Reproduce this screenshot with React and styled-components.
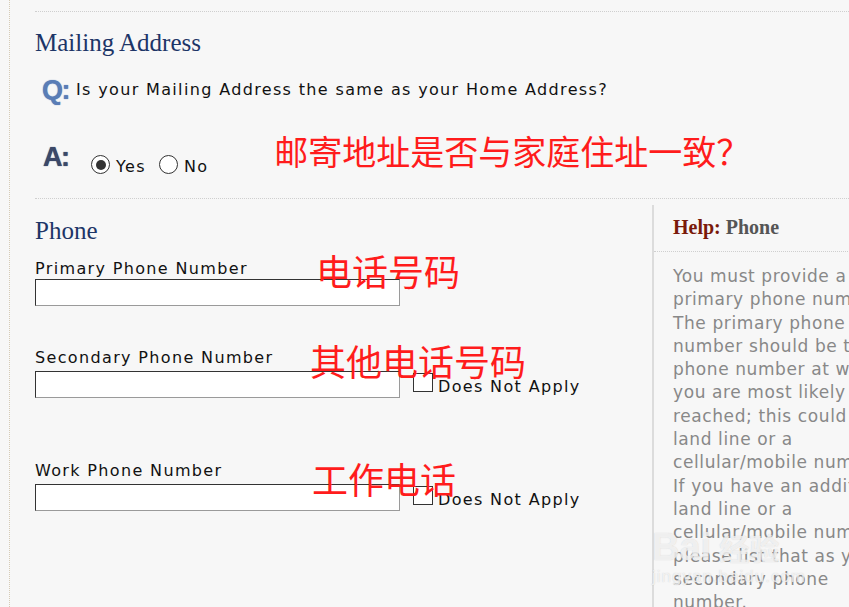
import React from 'react';
import styled, { createGlobalStyle } from 'styled-components';

const GlobalStyle = createGlobalStyle`
  html, body {
    margin: 0;
    padding: 0;
    background: #f7f7f7;
    overflow: hidden;
  }
  body {
    width: 849px;
    height: 607px;
    font-family: "DejaVu Sans", Verdana, sans-serif;
  }
`;

const Page = styled.div`
  margin-left: 9px;
  height: 607px;
  overflow: hidden;
  border-left: 1px dotted #d6cbb5;
  padding: 11px 0 0 25px;
  box-sizing: border-box;
`;

const Section = styled.section`
  border-top: 1px dotted #cfcfcf;
  margin-top: ${(p) => p.$top || 0}px;
`;

const Heading = styled.h2`
  margin: ${(p) => p.$top}px 0 0;
  font-family: "Liberation Serif", "Times New Roman", serif;
  font-weight: normal;
  font-size: 25px;
  line-height: 29px;
  color: #1d3567;
`;

const QaRow = styled.div`
  display: flex;
  align-items: flex-start;
  margin-top: ${(p) => p.$top}px;
  height: ${(p) => p.$height}px;
`;

const QaMark = styled.div`
  width: 26px;
  margin: ${(p) => p.$top || 0}px 0 0 ${(p) => p.$left}px;
  font-family: "Liberation Sans", Arial, sans-serif;
  font-weight: bold;
  font-size: 27px;
  line-height: 20px;
  height: 20px;
  letter-spacing: -1.5px;
  color: ${(p) => p.$color};
  text-shadow: 0 0 1px ${(p) => p.$color};
`;

const Text = styled.span`
  font-size: 16px;
  line-height: 19px;
  letter-spacing: 1.35px;
  color: #111;
`;

const Question = styled(Text)`
  margin-left: 8px;
`;

const RadioGroup = styled.div`
  display: flex;
  align-items: flex-start;
  margin: 23px 0 0 22px;
`;

const RadioOption = styled.label`
  display: flex;
  align-items: flex-start;
  margin-right: ${(p) => p.$gap || 0}px;
`;

const RadioDot = styled.span`
  width: 17px;
  height: 17px;
  border: 1px solid #333;
  border-radius: 50%;
  background: #fff;
  display: flex;
  align-items: center;
  justify-content: center;
  &::after {
    content: '';
    width: 10px;
    height: 10px;
    border-radius: 50%;
    background: ${(p) => (p.$checked ? '#333' : 'transparent')};
  }
`;

const RadioText = styled(Text)`
  margin: 2px 0 0 6px;
`;

const Note = styled.div`
  font-family: "Microsoft YaHei", "Noto Sans CJK SC", sans-serif;
  font-size: ${(p) => p.$size}px;
  line-height: 1;
  color: #ff1c1c;
  white-space: nowrap;
`;

const MailNote = styled(Note)`
  margin: 2px 0 0 66px;
`;

const Columns = styled.div`
  display: flex;
  align-items: flex-start;
`;

const FormColumn = styled.div`
  width: 617px;
  flex: none;
  padding-top: 17px;
`;

const Field = styled.div`
  position: relative;
  margin-top: ${(p) => p.$top}px;
`;

const FieldLabel = styled.label`
  display: block;
  font-size: 16px;
  line-height: 19px;
  letter-spacing: 1.35px;
  color: #111;
  margin-bottom: ${(p) => p.$gap}px;
`;

const FieldNote = styled(Note)`
  position: absolute;
  top: ${(p) => p.$y}px;
  left: ${(p) => p.$x}px;
  pointer-events: none;
`;

const InputRow = styled.div`
  display: flex;
  align-items: flex-start;
`;

const TextInput = styled.input`
  width: 365px;
  height: 27px;
  box-sizing: border-box;
  margin: 0;
  border: 1px solid;
  border-color: #333 #9a9a9a #9a9a9a #333;
  background: #fff;
  font-size: 15px;
`;

const CheckBox = styled.span`
  width: 20px;
  height: 19px;
  box-sizing: border-box;
  margin: 2px 0 0 13px;
  border: 1px solid #333;
  background: #fff;
`;

const CheckText = styled(Text)`
  margin: 6px 0 0 5px;
`;

const HelpPanel = styled.aside`
  flex: none;
  width: 260px;
  margin-top: 6px;
  min-height: 420px;
  border-left: 2px solid #dcdcdc;
  position: relative;
`;

const HelpHeader = styled.div`
  padding: 10px 0 12px 19px;
  border-bottom: 1px dotted #cfcfcf;
  font-family: "Liberation Serif", "Times New Roman", serif;
  font-weight: bold;
  font-size: 20px;
  line-height: 24px;
  color: #555;
`;

const HelpLead = styled.span`
  color: #7a1a0a;
`;

const HelpBody = styled.p`
  margin: 0;
  padding: 13px 0 0 19px;
  width: 232px;
  font-size: 17px;
  line-height: 23.3px;
  letter-spacing: 0.6px;
  color: #888;
`;

const Watermark = styled.div`
  position: absolute;
  left: -2px;
  top: 322px;
  color: rgba(255, 255, 255, 0.7);
  font-family: "Liberation Sans", Arial, sans-serif;
  pointer-events: none;
  text-shadow: 0 0 1px rgba(170, 170, 170, 0.55);
`;

const WatermarkBrand = styled.div`
  font-size: 38px;
  font-weight: bold;
  line-height: 40px;
  span {
    font-family: "Noto Sans CJK SC", sans-serif;
    font-size: 30px;
    margin-left: 8px;
  }
`;

const WatermarkUrl = styled.div`
  font-size: 17px;
  letter-spacing: 1px;
  line-height: 20px;
`;

const App = () => (
  <>
    <GlobalStyle />
    <Page>
      <Section>
        <Heading $top={16}>Mailing Address</Heading>
        <QaRow $top={23} $height={19}>
          <QaMark $left={7} $color="#5a7db6">Q:</QaMark>
          <Question>Is your Mailing Address the same as your Home Address?</Question>
        </QaRow>
        <QaRow $top={33} $height={44}>
          <QaMark $left={8} $top={15} $color="#3b4868">A:</QaMark>
          <RadioGroup>
            <RadioOption $gap={13}>
              <RadioDot $checked />
              <RadioText>Yes</RadioText>
            </RadioOption>
            <RadioOption>
              <RadioDot />
              <RadioText>No</RadioText>
            </RadioOption>
          </RadioGroup>
          <MailNote $size={34}>邮寄地址是否与家庭住址一致？</MailNote>
        </QaRow>
      </Section>

      <Section $top={22}>
        <Columns>
          <FormColumn>
            <Heading $top={0}>Phone</Heading>
            <Field $top={14}>
              <FieldLabel $gap={1}>Primary Phone Number</FieldLabel>
              <InputRow>
                <TextInput type="text" />
              </InputRow>
              <FieldNote $size={36} $x={281} $y={-7}>电话号码</FieldNote>
            </Field>
            <Field $top={42}>
              <FieldLabel $gap={4}>Secondary Phone Number</FieldLabel>
              <InputRow>
                <TextInput type="text" />
                <CheckBox />
                <CheckText>Does Not Apply</CheckText>
              </InputRow>
              <FieldNote $size={36} $x={275} $y={-6}>其他电话号码</FieldNote>
            </Field>
            <Field $top={63}>
              <FieldLabel $gap={4}>Work Phone Number</FieldLabel>
              <InputRow>
                <TextInput type="text" />
                <CheckBox />
                <CheckText>Does Not Apply</CheckText>
              </InputRow>
              <FieldNote $size={36} $x={277} $y={-1}>工作电话</FieldNote>
            </Field>
          </FormColumn>

          <HelpPanel>
            <HelpHeader>
              <HelpLead>Help:</HelpLead> Phone
            </HelpHeader>
            <HelpBody>
              You must provide a primary phone number. The primary phone number should be
              the phone number at which you are most likely to be reached; this could be a
              land line or a cellular/mobile number. If you have an additional land line or
              a cellular/mobile number, please list that as your secondary phone number.
            </HelpBody>
            <Watermark>
              <WatermarkBrand>
                Bai<span>经验</span>
              </WatermarkBrand>
              <WatermarkUrl>jingyan.baidu.com</WatermarkUrl>
            </Watermark>
          </HelpPanel>
        </Columns>
      </Section>
    </Page>
  </>
);

export default App;
